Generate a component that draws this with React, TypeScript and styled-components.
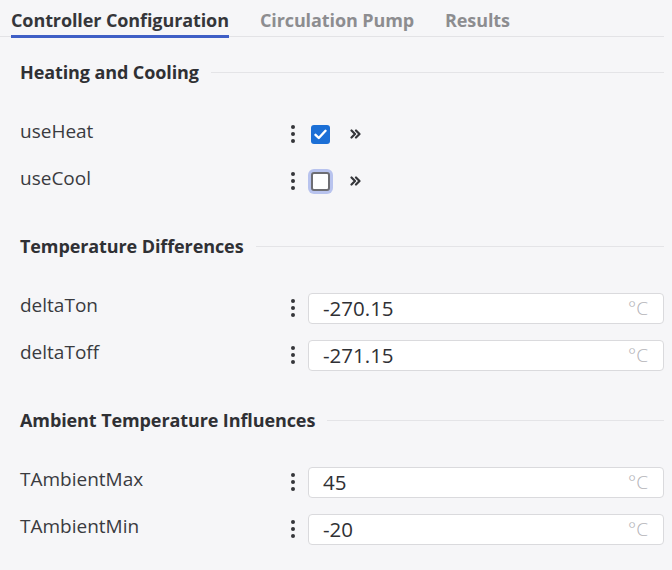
import React from "react";
import styled, { createGlobalStyle } from "styled-components";

const Global = createGlobalStyle`
  html, body { margin: 0; padding: 0; background: #f6f6f8; }
  body { font-family: "Open Sans", "Noto Sans", sans-serif; color: #35363a; }
  * { box-sizing: border-box; }
`;

const Page = styled.div`
  width: 672px;
  min-height: 570px;
  padding-right: 8px;
`;

const TabBar = styled.div`
  display: flex;
  gap: 31px;
  padding-left: 11px;
  height: 37px;
  border-bottom: 1px solid #e3e3e6;
  align-items: stretch;
`;

const Tab = styled.div<{ $active?: boolean }>`
  display: flex;
  align-items: center;
  font-size: 18px;
  font-weight: 700;
  letter-spacing: -0.1px;
  color: ${(p) => (p.$active ? "#35363a" : "#8d8d90")};
  border-bottom: 3px solid ${(p) => (p.$active ? "#3f5fc6" : "transparent")};
  margin-bottom: -2px;
  padding-top: 4px;
`;

const Content = styled.div`
  padding: 23px 0 0 20px;
  display: flex;
  flex-direction: column;
  gap: 38px;
`;

const Section = styled.section`
  display: flex;
  flex-direction: column;
`;

const SectionHeader = styled.div`
  display: flex;
  align-items: center;
  gap: 12px;
  height: 24px;
  margin-bottom: 34px;
  font-size: 18px;
  font-weight: 700;
  letter-spacing: -0.1px;
  color: #2f3034;
  white-space: nowrap;
  &::after {
    content: "";
    flex: 1;
    height: 1px;
    background: #e4e4e7;
  }
`;

const Rows = styled.div`
  display: flex;
  flex-direction: column;
  gap: 16px;
`;

const Row = styled.div`
  display: grid;
  grid-template-columns: 266px 1fr;
  align-items: center;
  height: 31px;
`;

const Label = styled.div`
  font-size: 19px;
  color: #3a3b3f;
  padding-bottom: 6px;
`;

const Control = styled.div`
  display: flex;
  align-items: center;
`;

const DotsButton = styled.div`
  width: 14px;
  height: 20px;
  margin-right: 8px;
  display: flex;
  flex-direction: column;
  align-items: center;
  justify-content: center;
  gap: 2.5px;
  span {
    width: 4.5px;
    height: 4.5px;
    border-radius: 50%;
    background: #35363a;
  }
`;

const Check = styled.div<{ $checked?: boolean; $focus?: boolean }>`
  width: 19px;
  height: 19px;
  margin-left: 3px;
  border-radius: 3px;
  display: flex;
  align-items: center;
  justify-content: center;
  background: ${(p) => (p.$checked ? "#1b6fd6" : "#ffffff")};
  border: ${(p) => (p.$checked ? "none" : "2px solid #6e6e73")};
  box-shadow: ${(p) => (p.$focus ? "0 0 0 3px #b8c3ee" : "none")};
`;

const Chevron = styled.div`
  margin-left: 20px;
  display: flex;
  align-items: center;
`;

const InputBox = styled.div`
  flex: 1;
  height: 31px;
  background: #ffffff;
  border: 1px solid #dadadd;
  border-radius: 4px;
  display: flex;
  align-items: center;
  padding: 0 15px 0 14px;
`;

const Value = styled.span`
  flex: 1;
  font-size: 20.5px;
  color: #2f3034;
`;

const Unit = styled.span`
  font-size: 19px;
  font-weight: 300;
  color: #b4b4b8;
`;

const Dots = () => (
  <DotsButton>
    <span />
    <span />
    <span />
  </DotsButton>
);

const CheckMark = () => (
  <svg width="13" height="11" viewBox="0 0 13 11">
    <path d="M1.5 5.8 L4.8 9 L11.5 1.8" fill="none" stroke="#fff" strokeWidth="2.4" strokeLinecap="round" strokeLinejoin="round" />
  </svg>
);

const DoubleChevron = () => (
  <svg width="11" height="10" viewBox="0 0 11 10">
    <path d="M1.5 1.5 L5 5 L1.5 8.5 M6 1.5 L9.5 5 L6 8.5" fill="none" stroke="#35363a" strokeWidth="2.2" strokeLinecap="round" strokeLinejoin="round" />
  </svg>
);

type BoolField = { name: string; checked: boolean; focus?: boolean };
type NumField = { name: string; value: string };

const BoolRow = ({ f }: { f: BoolField }) => (
  <Row>
    <Label>{f.name}</Label>
    <Control>
      <Dots />
      <Check $checked={f.checked} $focus={f.focus}>
        {f.checked && <CheckMark />}
      </Check>
      <Chevron>
        <DoubleChevron />
      </Chevron>
    </Control>
  </Row>
);

const NumRow = ({ f }: { f: NumField }) => (
  <Row>
    <Label>{f.name}</Label>
    <Control>
      <Dots />
      <InputBox>
        <Value>{f.value}</Value>
        <Unit>°C</Unit>
      </InputBox>
    </Control>
  </Row>
);

export default function App() {
  return (
    <Page>
      <Global />
      <TabBar>
        <Tab $active>Controller Configuration</Tab>
        <Tab>Circulation Pump</Tab>
        <Tab>Results</Tab>
      </TabBar>
      <Content>
        <Section>
          <SectionHeader>Heating and Cooling</SectionHeader>
          <Rows>
            <BoolRow f={{ name: "useHeat", checked: true }} />
            <BoolRow f={{ name: "useCool", checked: false, focus: true }} />
          </Rows>
        </Section>
        <Section>
          <SectionHeader>Temperature Differences</SectionHeader>
          <Rows>
            <NumRow f={{ name: "deltaTon", value: "-270.15" }} />
            <NumRow f={{ name: "deltaToff", value: "-271.15" }} />
          </Rows>
        </Section>
        <Section>
          <SectionHeader>Ambient Temperature Influences</SectionHeader>
          <Rows>
            <NumRow f={{ name: "TAmbientMax", value: "45" }} />
            <NumRow f={{ name: "TAmbientMin", value: "-20" }} />
          </Rows>
        </Section>
      </Content>
    </Page>
  );
}
